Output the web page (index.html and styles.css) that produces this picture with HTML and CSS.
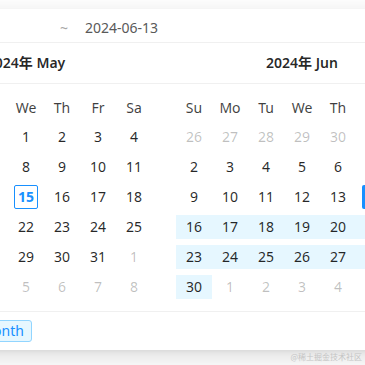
FILE: index.html
```html
<!DOCTYPE html>
<html lang="en">
<head>
    <meta charset="UTF-8">
    <meta name="viewport" content="width=device-width, initial-scale=1.0">
    <title>Date Range Picker</title>
    <link rel="stylesheet" href="styles.css">
</head>
<body>
    <!-- Range picker dropdown -->
    <div class="picker">
        <div class="range-input">
            <span class="separator">~</span>
            <span class="input-value">2024-06-13</span>
        </div>

        <div class="panels">
            <!-- May -->
            <div class="panel">
                <div class="panel-header">2024年 May</div>
                <div class="panel-body">
                    <table class="days">
                        <thead>
                            <tr><th>Su</th><th>Mo</th><th>Tu</th><th>We</th><th>Th</th><th>Fr</th><th>Sa</th></tr>
                        </thead>
                        <tbody>
                            <tr>
                                <td class="out"><span class="day">28</span></td>
                                <td class="out"><span class="day">29</span></td>
                                <td class="out"><span class="day">30</span></td>
                                <td><span class="day">1</span></td>
                                <td><span class="day">2</span></td>
                                <td><span class="day">3</span></td>
                                <td><span class="day">4</span></td>
                            </tr>
                            <tr>
                                <td><span class="day">5</span></td>
                                <td><span class="day">6</span></td>
                                <td><span class="day">7</span></td>
                                <td><span class="day">8</span></td>
                                <td><span class="day">9</span></td>
                                <td><span class="day">10</span></td>
                                <td><span class="day">11</span></td>
                            </tr>
                            <tr>
                                <td><span class="day">12</span></td>
                                <td><span class="day">13</span></td>
                                <td><span class="day">14</span></td>
                                <td><span class="day today">15</span></td>
                                <td><span class="day">16</span></td>
                                <td><span class="day">17</span></td>
                                <td><span class="day">18</span></td>
                            </tr>
                            <tr>
                                <td><span class="day">19</span></td>
                                <td><span class="day">20</span></td>
                                <td><span class="day">21</span></td>
                                <td><span class="day">22</span></td>
                                <td><span class="day">23</span></td>
                                <td><span class="day">24</span></td>
                                <td><span class="day">25</span></td>
                            </tr>
                            <tr>
                                <td><span class="day">26</span></td>
                                <td><span class="day">27</span></td>
                                <td><span class="day">28</span></td>
                                <td><span class="day">29</span></td>
                                <td><span class="day">30</span></td>
                                <td><span class="day">31</span></td>
                                <td class="out"><span class="day">1</span></td>
                            </tr>
                            <tr>
                                <td class="out"><span class="day">2</span></td>
                                <td class="out"><span class="day">3</span></td>
                                <td class="out"><span class="day">4</span></td>
                                <td class="out"><span class="day">5</span></td>
                                <td class="out"><span class="day">6</span></td>
                                <td class="out"><span class="day">7</span></td>
                                <td class="out"><span class="day">8</span></td>
                            </tr>
                        </tbody>
                    </table>
                </div>
            </div>

            <!-- June -->
            <div class="panel">
                <div class="panel-header">2024年 Jun</div>
                <div class="panel-body">
                    <table class="days">
                        <thead>
                            <tr><th>Su</th><th>Mo</th><th>Tu</th><th>We</th><th>Th</th><th>Fr</th><th>Sa</th></tr>
                        </thead>
                        <tbody>
                            <tr>
                                <td class="out"><span class="day">26</span></td>
                                <td class="out"><span class="day">27</span></td>
                                <td class="out"><span class="day">28</span></td>
                                <td class="out"><span class="day">29</span></td>
                                <td class="out"><span class="day">30</span></td>
                                <td class="out"><span class="day">31</span></td>
                                <td><span class="day">1</span></td>
                            </tr>
                            <tr>
                                <td><span class="day">2</span></td>
                                <td><span class="day">3</span></td>
                                <td><span class="day">4</span></td>
                                <td><span class="day">5</span></td>
                                <td><span class="day">6</span></td>
                                <td><span class="day">7</span></td>
                                <td><span class="day">8</span></td>
                            </tr>
                            <tr>
                                <td><span class="day">9</span></td>
                                <td><span class="day">10</span></td>
                                <td><span class="day">11</span></td>
                                <td><span class="day">12</span></td>
                                <td><span class="day">13</span></td>
                                <td><span class="day selected">14</span></td>
                                <td class="range"><span class="day">15</span></td>
                            </tr>
                            <tr>
                                <td class="range"><span class="day">16</span></td>
                                <td class="range"><span class="day">17</span></td>
                                <td class="range"><span class="day">18</span></td>
                                <td class="range"><span class="day">19</span></td>
                                <td class="range"><span class="day">20</span></td>
                                <td class="range"><span class="day">21</span></td>
                                <td class="range"><span class="day">22</span></td>
                            </tr>
                            <tr>
                                <td class="range"><span class="day">23</span></td>
                                <td class="range"><span class="day">24</span></td>
                                <td class="range"><span class="day">25</span></td>
                                <td class="range"><span class="day">26</span></td>
                                <td class="range"><span class="day">27</span></td>
                                <td class="range"><span class="day">28</span></td>
                                <td class="range"><span class="day">29</span></td>
                            </tr>
                            <tr>
                                <td class="range"><span class="day">30</span></td>
                                <td class="out"><span class="day">1</span></td>
                                <td class="out"><span class="day">2</span></td>
                                <td class="out"><span class="day">3</span></td>
                                <td class="out"><span class="day">4</span></td>
                                <td class="out"><span class="day">5</span></td>
                                <td class="out"><span class="day">6</span></td>
                            </tr>
                        </tbody>
                    </table>
                </div>
            </div>
        </div>

        <!-- Presets -->
        <div class="picker-footer">
            <span class="preset-tag">This Month</span>
        </div>
    </div>

    <div class="watermark">@稀土掘金技术社区</div>
</body>
</html>
```

FILE: styles.css
```css
body {
    margin: 0;
    width: 365px;
    height: 365px;
    overflow: hidden;
    background-color: #ffffff;
    font-family: "Noto Sans", "Noto Sans CJK SC", sans-serif;
    font-size: 14px;
    color: rgba(0, 0, 0, 0.85);
}
.picker {
    width: 552px;
    margin: 9px 0 0 -112px;
    background-color: #ffffff;
    box-shadow: 0 3px 6px -4px rgba(0, 0, 0, 0.12),
                0 6px 16px 0 rgba(0, 0, 0, 0.08),
                0 9px 28px 8px rgba(0, 0, 0, 0.05);
}

/* Input row */
.range-input {
    display: flex;
    align-items: center;
    height: 34px;
    padding: 4px 0 0 172px;
    box-sizing: border-box;
    border-bottom: 1px solid #f0f0f0;
}
.separator {
    color: #a6a6a6;
    margin-right: 17px;
}
.input-value {
    color: #595959;
}

/* Month panels */
.panels {
    display: flex;
}
.panel {
    width: 276px;
}
.panel-header {
    height: 40px;
    line-height: 40px;
    text-align: center;
    font-weight: 600;
    color: rgba(0, 0, 0, 0.85);
    border-bottom: 1px solid #f0f0f0;
}
.panel-body {
    padding: 8px 12px 9px;
}
.days {
    width: 252px;
    border-collapse: collapse;
    table-layout: fixed;
}
.days th,
.days td {
    width: 36px;
    height: 30px;
    padding: 0;
    text-align: center;
    font-weight: 400;
}
.days th {
    color: rgba(0, 0, 0, 0.75);
}
.day {
    display: inline-block;
    min-width: 24px;
    height: 24px;
    line-height: 24px;
    border-radius: 2px;
    box-sizing: border-box;
    vertical-align: middle;
}
.days td.out {
    color: rgba(0, 0, 0, 0.25);
}
.days td.range {
    background: linear-gradient(#e6f7ff, #e6f7ff) 0 3px / 100% 24px no-repeat;
}
.today {
    border: 1px solid #1890ff;
    color: #1890ff;
    font-weight: 700;
    line-height: 22px;
}
.selected {
    background-color: #1890ff;
    color: #ffffff;
}

/* Footer with presets */
.picker-footer {
    border-top: 1px solid #f0f0f0;
    padding: 8px 12px 8px 54px;
    line-height: 0;
}
.preset-tag {
    display: inline-block;
    height: 22px;
    line-height: 20px;
    padding: 0 7px;
    box-sizing: border-box;
    border: 1px solid #91d5ff;
    border-radius: 3px;
    background-color: #e6f7ff;
    color: #1890ff;
    font-size: 14px;
}

.watermark {
    position: absolute;
    right: 3px;
    bottom: 3px;
    font-size: 8px;
    color: #c4c4c4;
    font-family: "Noto Sans CJK SC", sans-serif;
}
```
